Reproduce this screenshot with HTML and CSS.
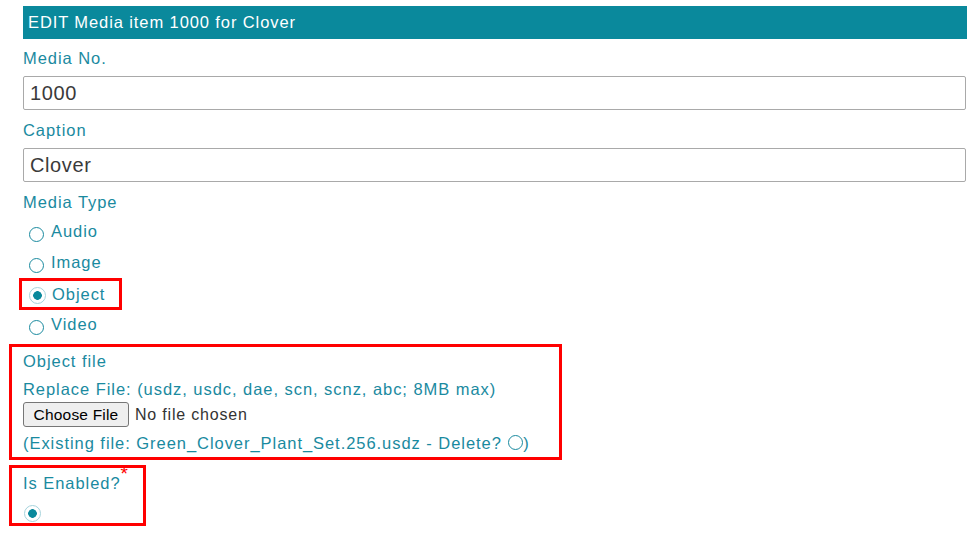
FILE: index.html
```html
<!DOCTYPE html>
<html lang="en">
<head>
<meta charset="utf-8">
<title>EDIT Media item 1000 for Clover</title>
<link rel="stylesheet" href="styles.css">
</head>
<body>
<form class="form">
  <div class="title">EDIT Media item 1000 for Clover</div>

  <label class="label" for="mediano">Media No.</label>
  <input class="field" id="mediano" type="text" value="1000">

  <label class="label" for="caption">Caption</label>
  <input class="field" id="caption" type="text" value="Clover">

  <div class="label">Media Type</div>
  <div class="radios">
    <label class="opt"><input class="radio" type="radio" name="type"><span>Audio</span></label>
    <label class="opt"><input class="radio" type="radio" name="type"><span>Image</span></label>
    <label class="opt mark"><input class="radio" type="radio" name="type" checked><span>Object</span></label>
    <label class="opt opt-last"><input class="radio" type="radio" name="type"><span>Video</span></label>
  </div>

  <div class="filebox">
    <div class="label flush">Object file</div>
    <div class="label line2">Replace File: (usdz, usdc, dae, scn, scnz, abc; 8MB max)</div>
    <div class="chooser">
      <button class="choose" type="button">Choose File</button>
      <span class="nofile">No file chosen</span>
    </div>
    <div class="label existing">(Existing file: Green_Clover_Plant_Set.256.usdz - Delete? <input class="radio small" type="radio" name="del">)</div>
  </div>

  <div class="enabledbox">
    <div class="label flush">Is Enabled?<span class="req">*</span></div>
    <input class="radio enabled" type="radio" name="enabled" checked>
  </div>
</form>
</body>
</html>
```
FILE: styles.css
```css
html, body {
  margin: 0;
  padding: 0;
  background: #ffffff;
}

body {
  font-family: "Liberation Sans", Arial, sans-serif;
}

.form {
  padding: 6px 6px 0 23px;
  display: flex;
  flex-direction: column;
  align-items: stretch;
}

.title {
  background: #0a899c;
  color: #ffffff;
  font-size: 16.5px;
  letter-spacing: 0.9px;
  height: 33px;
  line-height: 33px;
  padding-left: 5px;
}

.label {
  display: block;
  color: #1a8a9f;
  font-size: 16.5px;
  letter-spacing: 0.95px;
  line-height: 20px;
  margin-top: 10px;
}

.title + .label {
  margin-top: 9px;
}

.field {
  display: block;
  box-sizing: border-box;
  height: 34px;
  margin: 8px 1px 0 0;
  border: 1px solid #a9a9a9;
  border-radius: 2px;
  padding: 0 6px;
  font-family: "Liberation Sans", Arial, sans-serif;
  font-size: 20px;
  letter-spacing: 0.6px;
  color: #3a3a3a;
  outline: none;
}

.radios {
  display: flex;
  flex-direction: column;
  align-items: flex-start;
  margin-top: 9px;
}

.opt {
  display: inline-flex;
  align-items: center;
  height: 20px;
  padding-left: 6px;
  color: #1a8a9f;
  font-size: 16.5px;
  letter-spacing: 0.95px;
  margin-top: 11px;
}

.opt:first-child {
  margin-top: 0;
}

.opt span {
  margin-left: 7px;
}

.opt .radio {
  position: relative;
  top: 3px;
}

.mark {
  border: 3px solid #ff0000;
  margin-left: -4px;
  padding: 3px 14px 3px 7px;
  margin-top: 6px;
}

.mark span {
  margin-left: 6px;
}

.mark .radio {
  top: 1px;
}

.opt-last {
  margin-top: 4px;
}

.radio {
  -webkit-appearance: none;
  appearance: none;
  box-sizing: border-box;
  width: 15px;
  height: 15px;
  margin: 0;
  border: 1.5px solid #1a8a9f;
  border-radius: 50%;
  background: #ffffff;
  flex: none;
}

.radio:checked {
  border: 1px solid #a6d3dc;
  background: radial-gradient(circle, #0a899c 0 4px, #ffffff 4.6px);
  width: 17px;
  height: 17px;
}

.filebox {
  box-sizing: border-box;
  width: 553px;
  margin-left: -14px;
  margin-top: 10px;
  border: 3px solid #ff0000;
  padding: 4px 0 4px 11px;
}

.flush {
  margin-top: 0;
}

.line2 {
  margin-top: 8px;
}

.chooser {
  display: flex;
  align-items: center;
  margin-top: 3px;
}

.choose {
  box-sizing: border-box;
  width: 106px;
  height: 25px;
  margin: 0;
  padding: 0;
  background: #efefef;
  border: 1px solid #767676;
  border-radius: 3px;
  font-family: "Liberation Sans", Arial, sans-serif;
  font-size: 15.5px;
  letter-spacing: 0.2px;
  color: #000000;
}

.nofile {
  margin-left: 6px;
  font-size: 16px;
  letter-spacing: 0.8px;
  color: #333333;
}

.existing {
  margin-top: 6px;
}

.radio.small {
  width: 15px;
  height: 15px;
  vertical-align: -1px;
  margin: 0 0 0 1px;
}

.enabledbox {
  box-sizing: border-box;
  align-self: flex-start;
  width: 137px;
  margin-left: -14px;
  margin-top: 5px;
  border: 3px solid #ff0000;
  padding: 5px 0 1px 11px;
  display: flex;
  flex-direction: column;
  align-items: flex-start;
}

.req {
  color: #ff0000;
  font-size: 19px;
  position: relative;
  top: -9px;
  margin-left: 0;
  letter-spacing: 0;
}

.radio.enabled {
  margin-top: 12px;
  margin-left: 1px;
}
```
